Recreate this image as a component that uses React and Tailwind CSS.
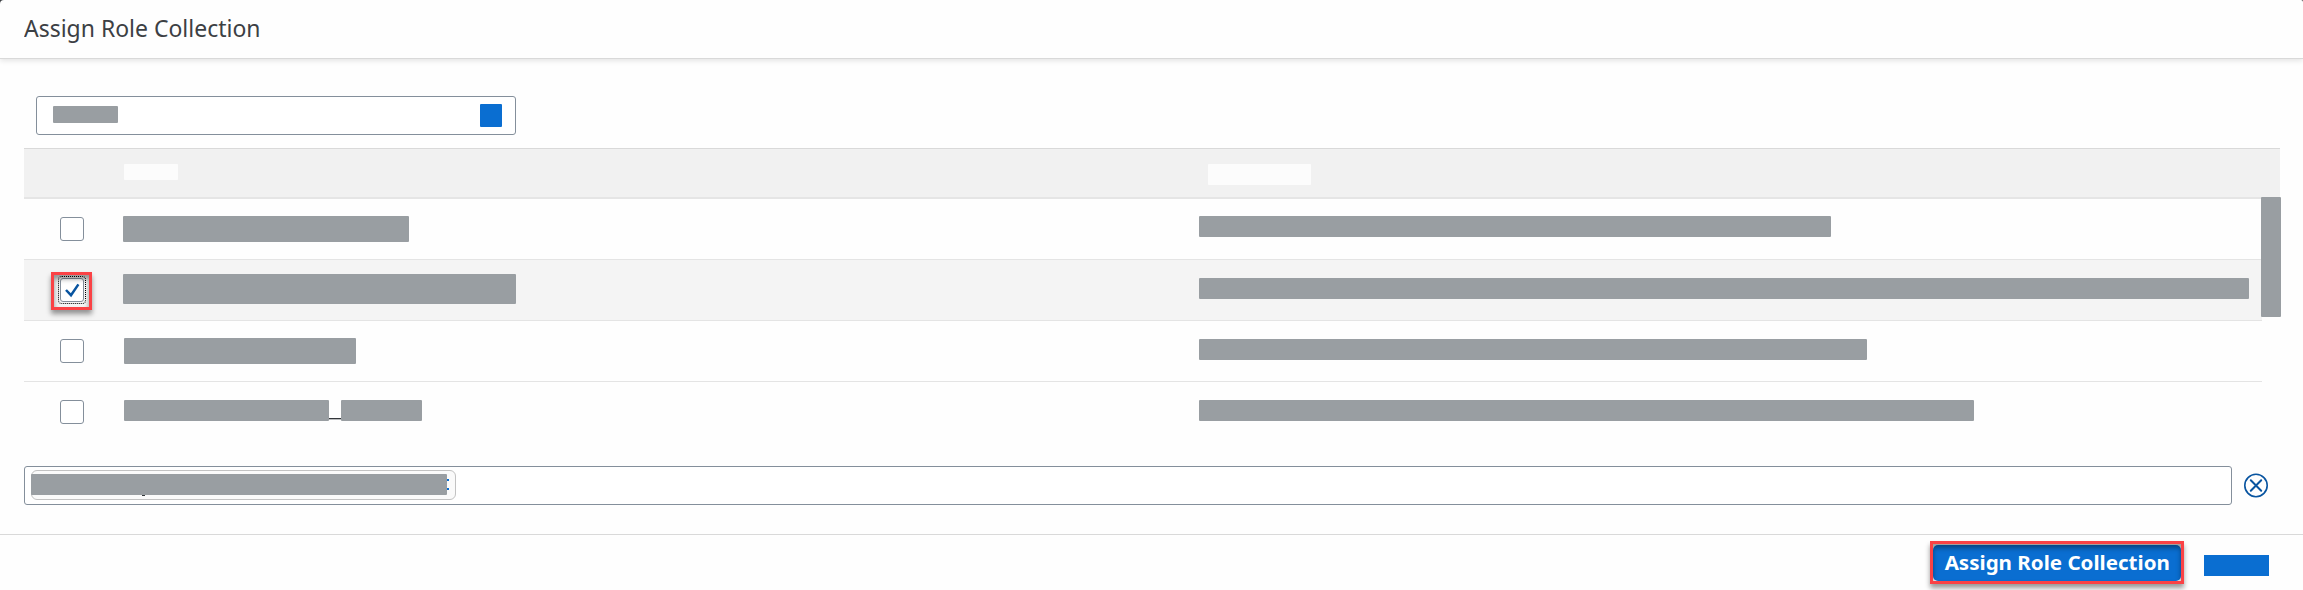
const rows = [
  { name: "mt-[17px] ml-[39px] w-[286px] h-[26px]", desc: "mt-[17px] w-[632px]" },
  { name: "mt-[14px] ml-[39px] w-[393px] h-[30px]", desc: "mt-[18px] w-[1050px]", selected: true },
  { name: "mt-[17px] ml-[40px] w-[232px] h-[26px]", desc: "mt-[18px] w-[668px]" },
  { name: "mt-[18px] ml-[40px] w-[205px] h-[21px]", desc: "mt-[18px] w-[775px]", extra: true },
];

function Checkbox({ checked }) {
  return (
    <div className="relative mt-[18px] ml-9 h-6 w-6 shrink-0 rounded-[3px] border border-[#848f9b] bg-white">
      {checked && (
        <>
          <svg className="absolute inset-0" width="22" height="22" viewBox="0 0 22 22" fill="none">
            <path d="M5 11l5 5.2L17.4 5.4" stroke="#0854a0" strokeWidth="2.5" />
          </svg>
          <div className="absolute -top-[3px] -left-[3px] h-7 w-7 rounded-[4px] border border-dotted border-black" />
          <div className="absolute -top-[7px] -left-[10px] h-[38px] w-[41px] border-3 border-[#fa4245] shadow-[0_4px_5px_rgba(0,0,0,0.4),inset_0_4px_5px_rgba(0,0,0,0.4)]" />
        </>
      )}
    </div>
  );
}

function Row({ row }) {
  return (
    <div className={row.selected ? "flex h-[61px] w-[2238px] border-b border-[#e4e4e4] bg-[#f4f4f4]" : "flex h-[61px] w-[2238px] border-b border-[#e4e4e4] last:border-transparent"}>
      <div className="flex w-[1175px] shrink-0">
        <Checkbox checked={row.selected} />
        <div className={"shrink-0 rounded-[1px] bg-[#999ea2] " + row.name} />
        {row.extra && (
          <>
            <div className="mt-9 h-[2px] w-3 border-b border-[#b8babc] bg-[#32363a]" />
            <div className="mt-[18px] h-[21px] w-[81px] rounded-[1px] bg-[#999ea2]" />
          </>
        )}
      </div>
      <div className={"h-[21px] shrink-0 rounded-[1px] bg-[#999ea2] " + row.desc} />
    </div>
  );
}

export default function App() {
  return (
    <div className="bg-[#3a3d40]">
      <div className="flex h-[590px] w-[2303px] flex-col overflow-hidden rounded-tl-[4px] rounded-tr-[2px] bg-[#fefefe] font-['Noto_Sans',sans-serif] text-[#32363a]">
        <header className="flex h-[59px] shrink-0 border-b border-[#d9d9d9] pt-3 pl-6 shadow-[0_2px_5px_rgba(0,0,0,0.1)]">
          <h1 className="origin-left scale-x-[0.957] text-[24px] leading-8 whitespace-nowrap text-[#3c4044]">Assign Role Collection</h1>
        </header>
        <main className="h-[476px] shrink-0 border-b border-[#d9d9d9] px-6 pt-[37px]">
          <div className="ml-3 flex h-[39px] w-[480px] justify-between rounded-[3px] border border-[#848f9b] bg-white">
            <div className="mt-[9px] ml-4 h-[17px] w-[65px] rounded-[1px] bg-[#999ea2]" />
            <div className="mt-[7px] mr-[13px] h-[23px] w-[22px] rounded-[1px] bg-[#0a6ed1]" />
          </div>
          <div className="mt-[13px] flex h-[51px] w-[2256px] border-t border-b-2 border-t-[#d9d9d9] border-b-[#e5e5e5] bg-[#f1f1f1]">
            <div className="mt-[15px] ml-[100px] h-4 w-[54px] rounded-[1px] bg-[#fcfcfc]" />
            <div className="mt-[15px] ml-[1030px] h-[21px] w-[103px] rounded-[1px] bg-[#fcfcfc]" />
          </div>
          <div className="flex w-[2257px]">
            <div className="w-[2237px] shrink-0">
              {rows.map((row, i) => (
                <Row key={i} row={row} />
              ))}
            </div>
            <div className="relative -mt-[2px] h-[120px] w-5 rounded-[1px] bg-[#999ea2]" />
          </div>
          <div className="mt-[23px] flex">
            <div className="h-[39px] w-[2208px] rounded-[3px] border border-[#848f9b] bg-white pt-[3px] pl-[6px]">
              <div className="relative flex h-[30px] w-[425px] items-start rounded-[6px] border border-[#c2c2c2] bg-[#fafafa] pt-[3px]">
                <div className="-ml-px h-[21px] w-[416px] rounded-[1px] bg-[#999ea2]" />
                <div className="mt-[5px] flex flex-col gap-[7px]">
                  <div className="h-[2px] w-[2px] bg-[#0a6ed1]" />
                  <div className="h-[2px] w-[2px] bg-[#0a6ed1]" />
                </div>
                <div className="absolute top-6 left-[110px] h-px w-[3px] bg-[#32363a]" />
              </div>
            </div>
            <svg className="mt-[7px] ml-3" width="24" height="25" viewBox="0 0 24 25" fill="none" stroke="#0854a0">
              <circle cx="12" cy="12.5" r="11.2" strokeWidth="1.6" />
              <path d="M6.8 7.3l10.4 10.4M17.2 7.3L6.8 17.7" strokeWidth="2" strokeLinecap="round" />
            </svg>
          </div>
        </main>
        <footer className="flex h-[55px] shrink-0 pt-[6px] pl-[1930px]">
          <div className="relative h-[43px] w-[254px] p-[3px]">
            <button className="mt-px flex h-[36px] w-[248px] justify-center rounded-[5px] bg-[#0a6ed1] text-[19.4px] leading-9 font-bold whitespace-nowrap text-white">
              <span className="block scale-x-[1.06]">Assign Role Collection</span>
            </button>
            <div className="absolute inset-0 border-3 border-[#fa4245] shadow-[0_4px_5px_rgba(0,0,0,0.4),inset_0_4px_5px_rgba(0,0,0,0.4)]" />
          </div>
          <div className="mt-[14px] ml-5 h-[21px] w-[65px] bg-[#0a6ed1]" />
        </footer>
      </div>
    </div>
  );
}
